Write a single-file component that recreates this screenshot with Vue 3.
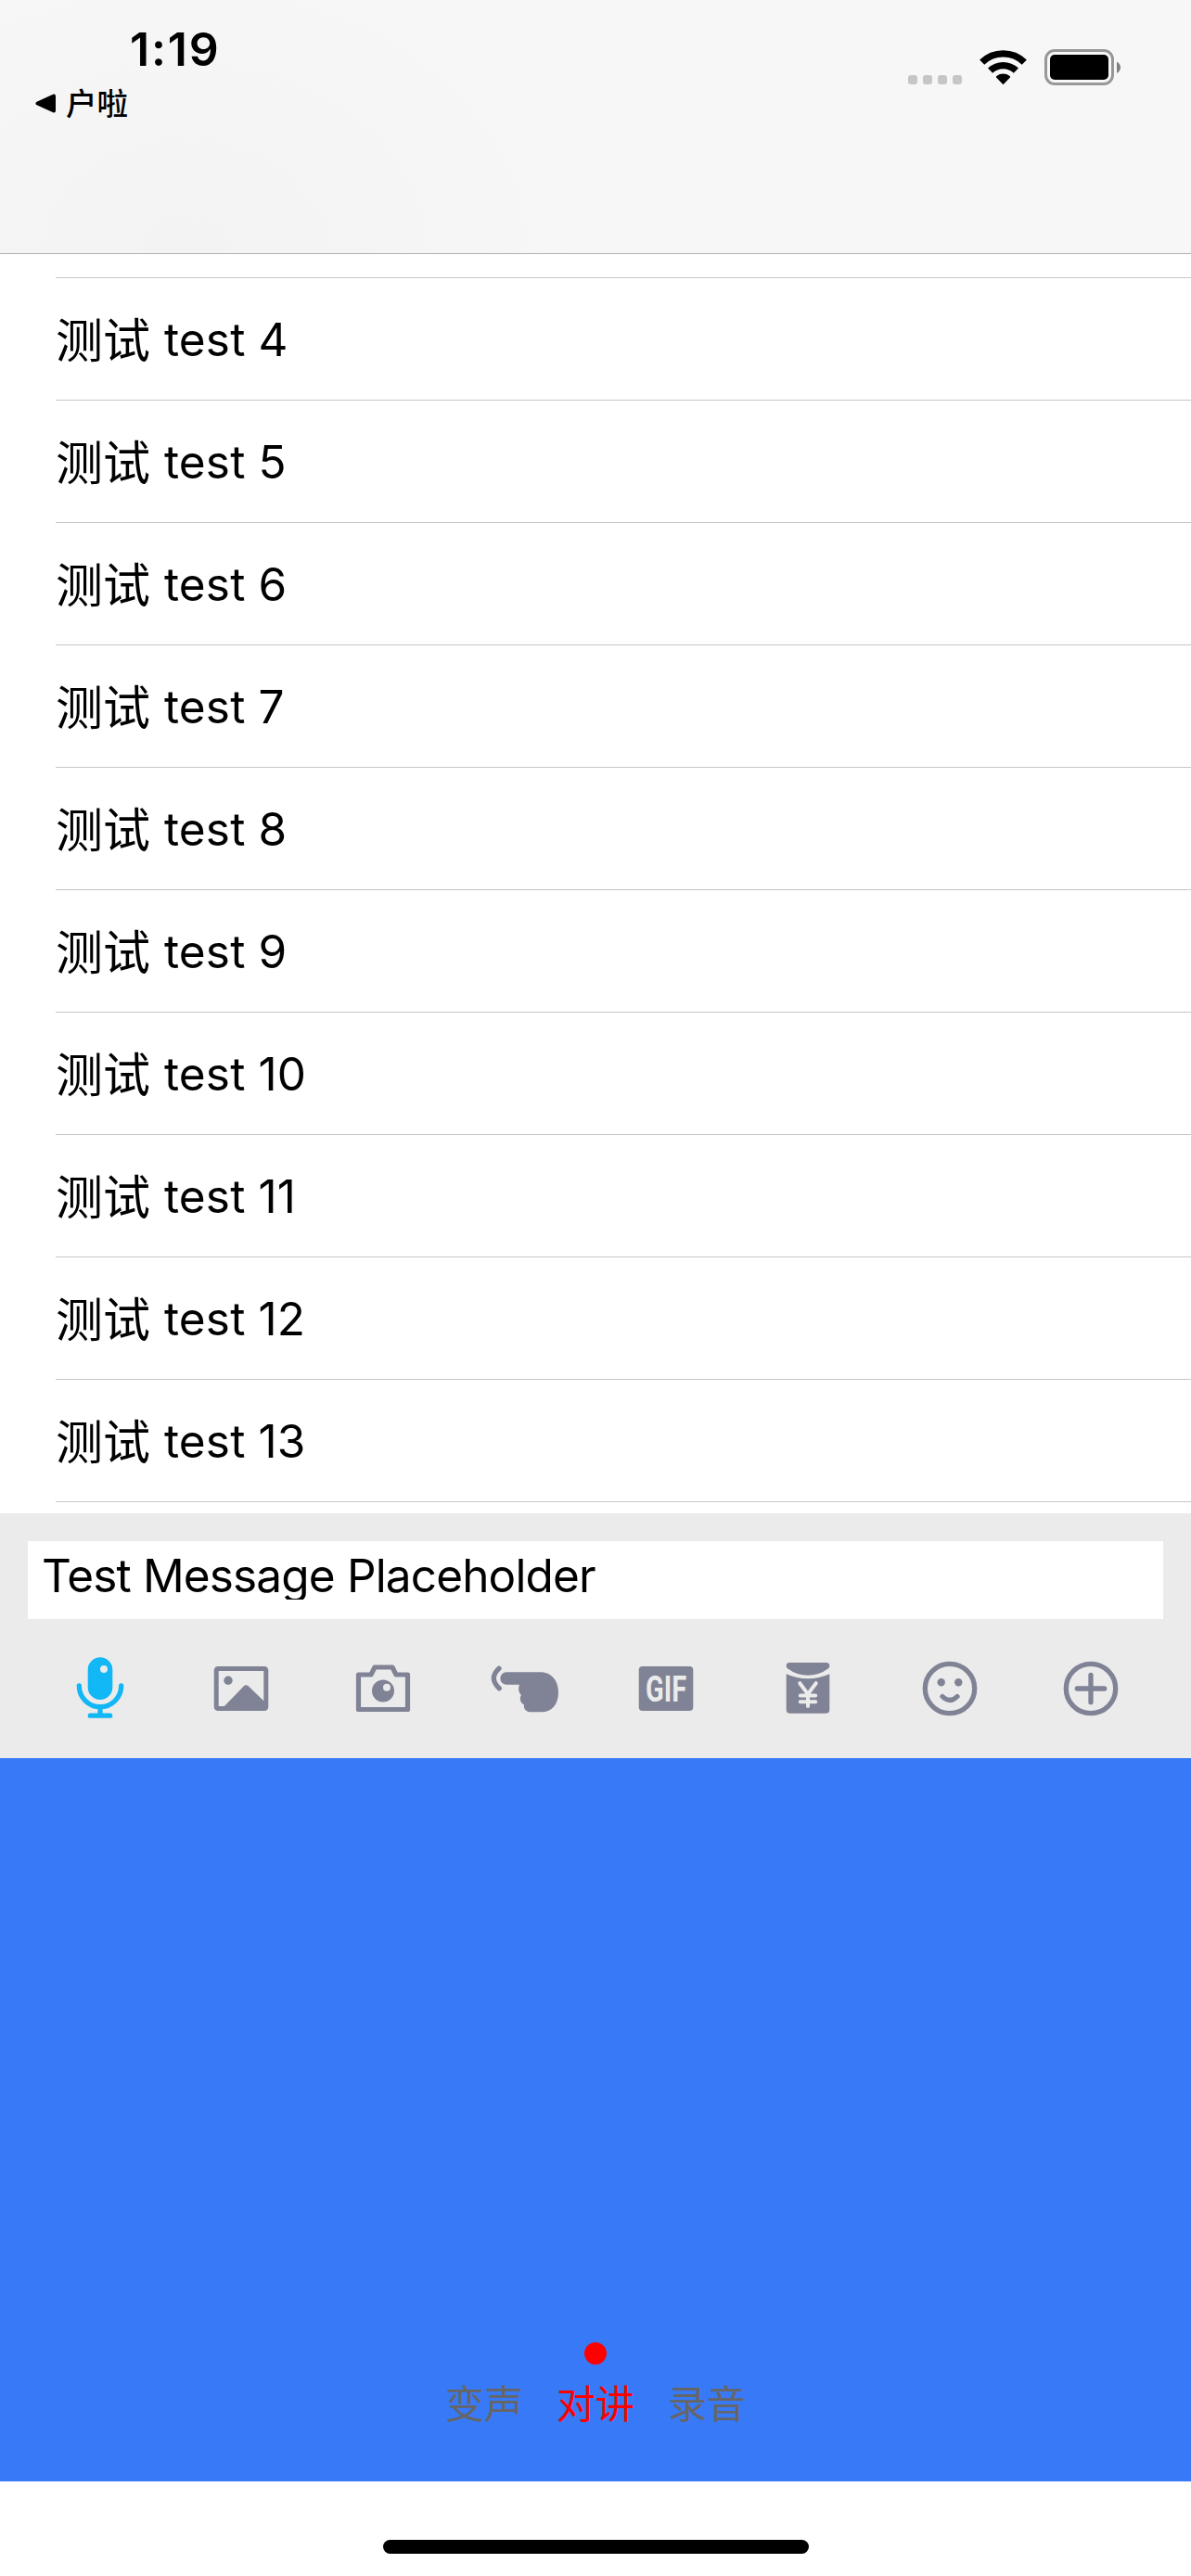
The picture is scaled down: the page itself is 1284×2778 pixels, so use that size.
<script setup>
const rows = [4, 5, 6, 7, 8, 9, 10, 11, 12, 13]
const tabs = ['变声', '对讲', '录音']
const activeTab = 1
</script>

<template>
  <div class="screen">
    <header class="nav">
      <div class="status-left">
        <div class="time">1:19</div>
        <div class="back">
          <svg width="22" height="21" viewBox="0 0 22 21"><path d="M2.500 10.500 L20 2.500 V18.500 Z" fill="#000" stroke="#000" stroke-width="4" stroke-linejoin="round" /></svg>
          <span>户啦</span>
        </div>
      </div>
      <div class="status-right">
        <svg width="230" height="40" viewBox="979 53 230 40">
          <g fill="#c6c6c6">
            <rect x="979" y="81" width="10" height="10" rx="3" />
            <rect x="995" y="81" width="10" height="10" rx="3" />
            <rect x="1011" y="81" width="10" height="10" rx="3" />
            <rect x="1027" y="81" width="10" height="10" rx="3" />
          </g>
          <g fill="none" stroke="#000">
            <path d="M1058.700 67.200 A32.600 32.600 0 0 1 1104.300 67.200" stroke-width="7.400" />
            <path d="M1067.600 76.200 A20 20 0 0 1 1095.400 76.200" stroke-width="7.400" />
          </g>
          <path d="M1081.500 91.300 L1074 83.600 Q1073.600 82.600 1074.400 82 A11.500 11.500 0 0 1 1088.600 82 Q1089.400 82.600 1089 83.600 Z" />
          <rect x="1127.500" y="54.500" width="72" height="36" rx="9.500" fill="none" stroke="#979797" stroke-width="3" />
          <rect x="1132" y="59" width="63" height="27" rx="5" />
          <path d="M1204 66.500 Q1208 69 1208 72.700 Q1208 76.500 1204 79 Z" fill="#808080" />
        </svg>
      </div>
    </header>

    <main class="list">
      <div v-for="n in rows" :key="n" class="row">
        <span class="cjk">测试</span><span class="lat">test {{ n }}</span>
      </div>
    </main>

    <section class="bar">
      <div class="field"><span>Test Message Placeholder</span></div>
      <div class="tools">
        <div class="tool">
          <svg viewBox="-48 -48 96 96">
            <path fill="#12b7f5" fill-rule="evenodd" d="M-13.300 -20.400 a13.300 13.300 0 0 1 26.600 0 V-1.300 a13.300 13.300 0 0 1 -26.600 0 Z M0 -21 a4 4 0 0 0 8 0 a4 4 0 0 0 -8 0 Z" />
            <path d="M-22.700 -3 a22.700 22.700 0 0 0 45.400 0 M0 20 V29 M-10.700 29.200 H10.700" fill="none" stroke="#12b7f5" stroke-width="5.300" stroke-linecap="round" />
          </svg>
        </div>
        <div class="tool">
          <svg viewBox="-48 -48 96 96">
            <rect x="-26.800" y="-21.500" width="53.600" height="43" rx="1.800" fill="none" stroke="#808395" stroke-width="5" />
            <circle cx="-14" cy="-8.700" r="4.700" />
            <path d="M-18.700 19.500 L2.600 -2.400 Q5.300 -5 8 -2.400 L25 14 V20 Z" />
          </svg>
        </div>
        <div class="tool">
          <svg viewBox="-48 -48 96 96">
            <path d="M-26.500 22.500 V-15 H-13 L-9 -23 H10 L14 -15 H26.500 V22.500 Z" fill="none" stroke="#808395" stroke-width="5.200" stroke-linejoin="round" />
            <path fill-rule="evenodd" d="M-12 2.600 a12 12 0 0 0 24 0 a12 12 0 0 0 -24 0 Z M0 -1.300 a4 4 0 0 1 8 0 a4 4 0 0 1 -8 0 Z" />
          </svg>
        </div>
        <div class="tool">
          <svg viewBox="-48 -48 96 96">
            <path d="M-28 -21.700 Q-39.500 -11 -27.700 -0.300" fill="none" stroke="#808395" stroke-width="5.300" stroke-linecap="round" />
            <path d="M-20 -17.700 H17 C28 -17.700 36 -9 36 4 C36 17 29 25.300 18 25.300 H6.500 C1.500 25.300 -2 22 -1 17.500 C-5 15.500 -6.500 10.500 -4 7 C-7 4.500 -7.500 0 -6 -4.300 H-20 A6.700 6.700 0 0 1 -20 -17.700 Z" />
          </svg>
        </div>
        <div class="tool">
          <svg viewBox="-48 -48 96 96">
            <rect x="-29.300" y="-24" width="58.600" height="48" rx="4" />
            <text class="gif" x="0" y="13.700" text-anchor="middle" textLength="44" lengthAdjust="spacingAndGlyphs">GIF</text>
          </svg>
        </div>
        <div class="tool">
          <svg viewBox="-48 -48 96 96">
            <path d="M-20 -28 H20 Q23.300 -28 23.300 -24.500 Q23.300 -23 22 -21.800 Q12 -14.300 0 -14.300 Q-12 -14.300 -22 -21.800 Q-23.300 -23 -23.300 -24.500 Q-23.300 -28 -20 -28 Z" />
            <path d="M-23.300 -15.800 Q-12 -10.700 0 -10.700 Q12 -10.700 23.300 -15.800 V22.700 Q23.300 26.700 19.300 26.700 H-19.300 Q-23.300 26.700 -23.300 22.700 Z" />
            <path d="M-8.700 -5.800 L0 6 L8.700 -5.800 M0 6 V19 M-8.200 7.500 H8.200 M-8.200 14.200 H8.200" fill="none" stroke="#ebebeb" stroke-width="4" stroke-linecap="round" />
          </svg>
        </div>
        <div class="tool">
          <svg viewBox="-48 -48 96 96">
            <circle r="26.700" fill="none" stroke="#808395" stroke-width="5.300" />
            <circle cx="-9.300" cy="-6.700" r="4.200" />
            <circle cx="9.300" cy="-6.700" r="4.200" />
            <path d="M-8 8.500 Q0 16.500 8 8.500" fill="none" stroke="#808395" stroke-width="5.300" stroke-linecap="round" />
          </svg>
        </div>
        <div class="tool">
          <svg viewBox="-48 -48 96 96">
            <circle r="26.700" fill="none" stroke="#808395" stroke-width="5.300" />
            <path d="M-14.700 0 H14.700 M0 -14.700 V14.700" fill="none" stroke="#808395" stroke-width="5.300" stroke-linecap="round" />
          </svg>
        </div>
      </div>
    </section>

    <section class="panel">
      <div class="dot"></div>
      <div class="tabs">
        <span v-for="(t, i) in tabs" :key="t" :class="{ active: i === activeTab }">{{ t }}</span>
      </div>
    </section>

    <footer class="home"><div class="indicator"></div></footer>
  </div>
</template>

<style>
body { margin: 0; background: #fff; }
</style>

<style scoped>
.screen {
  width: 1284px;
  height: 2778px;
  display: flex;
  flex-direction: column;
  overflow: hidden;
  background: #fff;
  color: #000;
  font-family: Inter, "Noto Sans CJK SC", sans-serif;
}
.nav {
  box-sizing: border-box;
  height: 274px;
  flex: none;
  display: flex;
  justify-content: space-between;
  border-bottom: 1px solid #b0b0b0;
  background: radial-gradient(ellipse 420px 330px at 200px 274px, #f3f3f3, #f7f7f7);
}
.status-left { padding: 23px 0 0 38px; }
.time {
  margin-left: 102px;
  font-size: 50px;
  font-weight: 600;
  line-height: 60px;
  letter-spacing: 1.800px;
}
.back {
  display: flex;
  align-items: center;
  gap: 11px;
  height: 56px;
  font: 500 33.500px/56px "Noto Sans CJK SC", sans-serif;
}
.back span { padding-bottom: 3px; }
.status-right { padding: 53px 75px 0 0; }
.status-right svg { display: block; }
.list {
  height: 1358px;
  flex: none;
  padding-left: 60px;
  overflow: hidden;
}
.list::before {
  content: "";
  display: block;
  height: 25px;
  border-bottom: 1px solid #c6c6c8;
}
.row {
  box-sizing: border-box;
  height: 132px;
  display: flex;
  align-items: center;
  border-bottom: 1px solid #c6c6c8;
  line-height: 60px;
}
.cjk {
  width: 117px;
  padding-bottom: 3px;
  font: 400 51px/60px "Noto Sans CJK SC", sans-serif;
}
.lat {
  padding-top: 1px;
  font-size: 49.500px;
  letter-spacing: 0.150px;
}
.bar {
  height: 264px;
  flex: none;
  box-sizing: border-box;
  padding-top: 30px;
  background: #ebebeb;
}
.field {
  height: 84px;
  margin: 0 30px;
  background: #fff;
}
.field span {
  display: block;
  height: 63px;
  padding-left: 15px;
  overflow: hidden;
  font-size: 49.500px;
  line-height: 74px;
  letter-spacing: -0.850px;
  white-space: nowrap;
}
.tools {
  display: flex;
  height: 150px;
  align-items: center;
  padding: 0 31.330px;
}
.tool {
  flex: 1;
  display: flex;
  justify-content: center;
}
.tool svg { width: 96px; height: 96px; fill: #808395; }
.tool svg .gif {
  fill: #ebebeb;
  font: 700 38px Roboto, sans-serif;
}
.panel {
  height: 780px;
  flex: none;
  box-sizing: border-box;
  display: flex;
  flex-direction: column;
  align-items: center;
  justify-content: flex-end;
  padding-bottom: 56px;
  background: #3879f8;
}
.dot {
  width: 24px;
  height: 24px;
  border-radius: 50%;
  background: #f00;
}
.tabs {
  display: flex;
  gap: 36px;
  margin-top: 10px;
  color: #666;
  font: 400 42px/60px "Noto Sans CJK SC", sans-serif;
}
.tabs .active { color: #f00; }
.home {
  flex: 1;
  display: flex;
  justify-content: center;
  align-items: flex-end;
  padding-bottom: 24px;
}
.indicator {
  width: 459px;
  height: 15px;
  border-radius: 8px;
  background: #000;
}
</style>
